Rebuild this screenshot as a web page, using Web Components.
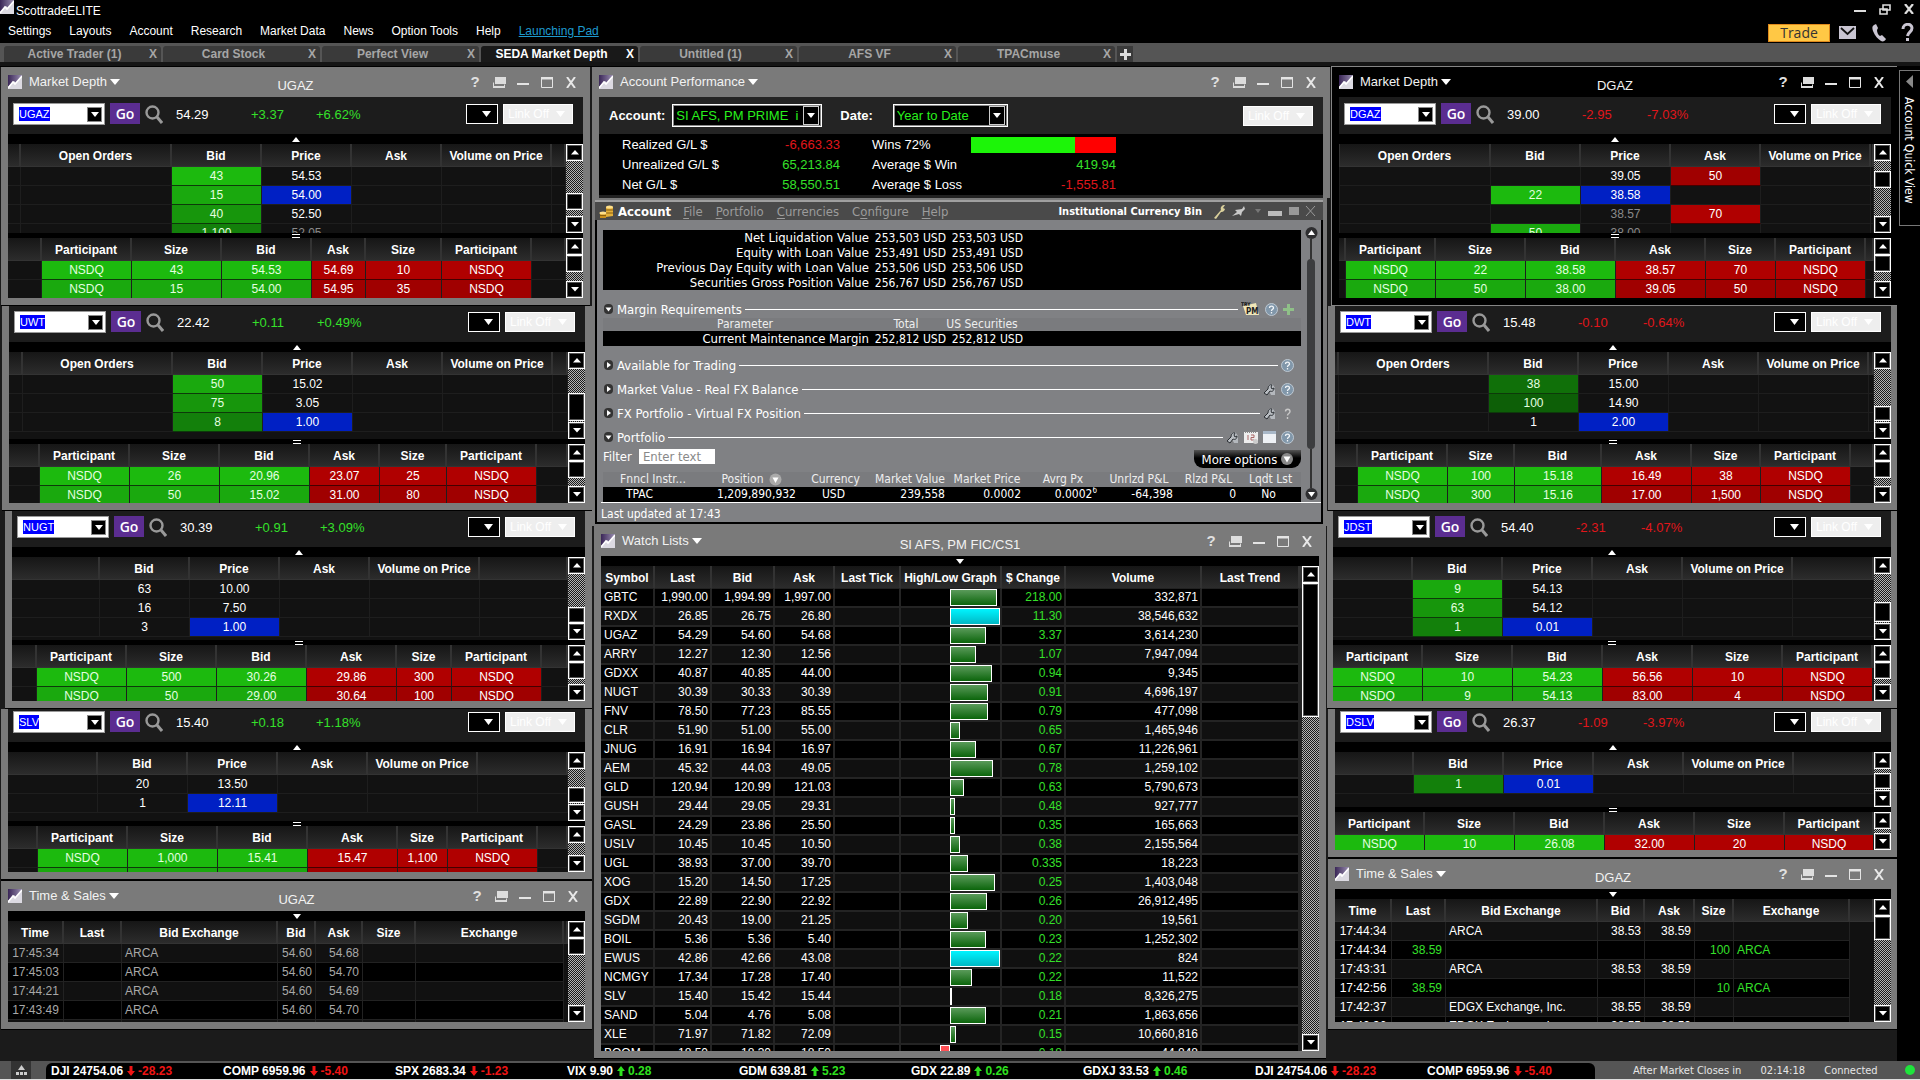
<!DOCTYPE html>
<html lang="en">
<head>
<meta charset="utf-8">
<title>ScottradeELITE</title>
<style>
  html, body { margin: 0; height: 100%; background: #000; }
  body { font: 12px/14px "Liberation Sans", Arial, sans-serif; color: #fff; overflow: hidden; }
</style>
</head>
<body>
<trading-app></trading-app>

<script>
/* ---------- helpers ---------- */
const BASE = `
  *, *::before, *::after { box-sizing: border-box; }
  button, select, input { font: inherit; color: inherit; margin: 0; padding: 0; border: 0; border-radius: 0; background: none; appearance: none; outline: none; }
  svg { display: block; }
  table { border-collapse: separate; border-spacing: 0; table-layout: fixed; width: 100%; }
  th, td { padding: 0; overflow: hidden; white-space: nowrap; }
`;
function define(name, css, render) {
  customElements.define(name, class extends HTMLElement {
    constructor() {
      super();
      this.attachShadow({ mode: 'open' });
    }
    connectedCallback() {
      this.shadowRoot.innerHTML = `<style>${BASE}${css}</style>${render(this)}`;
    }
  });
}
const cols = ws => `<colgroup>${ws.map(w => w ? `<col style="width:${w}px">` : '<col>').join('')}</colgroup>`;

/* ---------- data ---------- */
const DEPTH = {
  UGAZ: { last: '54.29', chg: '+3.37', pct: '+6.62%', bar: 37, pt: 6, pr: 10,
    top: { h: 89, cols: [13,151,90,90,90,110,0], orders: 1, before: 32, thumb: 17,
      rows: [['43','g1','54.53'],['15','g2','54.00','b'],['40','g3','52.50'],['1,100','g4','52.05','d']] },
    low: { h: 60, cols: [34,90,90,90,54,76,90,0], thumb: 17,
      rows: [['43','54.53','54.69','10'],['15','54.00','54.95','35']] } },
  UWT: { last: '22.42', chg: '+0.11', pct: '+0.49%', bar: 36, pt: 5, pr: 10,
    top: { h: 87, cols: [14,150,90,90,90,110,0], orders: 1, before: 24, thumb: 28,
      rows: [['50','g2','15.02'],['75','g3','3.05'],['8','g4','1.00','b']] },
    low: { h: 59, cols: [31,90,90,90,70,67,90,0], thumb: 17,
      rows: [['26','20.96','23.07','25'],['50','15.02','31.00','80']] } },
  NUGT: { last: '30.39', chg: '+0.91', pct: '+3.09%', bar: 36, pt: 5, pr: 10,
    top: { h: 83, cols: [88,90,90,90,110,0], before: 33, thumb: 16,
      rows: [['63','','10.00'],['16','','7.50'],['3','','1.00','b']] },
    low: { h: 56, cols: [25,90,90,90,90,55,90,0], thumb: 17,
      rows: [['500','30.26','29.86','300'],['50','29.00','30.64','100']] } },
  SLV: { last: '15.40', chg: '+0.18', pct: '+1.18%', bar: 33, pt: 2, pr: 10,
    top: { h: 69, cols: [90,90,90,90,110,0], before: 18, thumb: 16,
      rows: [['20','','13.50'],['1','','12.11','b']] },
    low: { h: 46, cols: [30,90,90,90,90,50,90,0],
      rows: [['1,000','15.41','15.47','1,100'],['','','','']] } },
  DGAZ: { last: '39.00', chg: '-2.95', pct: '-7.03%', bar: 37, pt: 6, pr: 10,
    top: { h: 89, cols: [1,151,90,90,90,110,0], orders: 1, before: 10, thumb: 17,
      rows: [['','','39.05','','50','r2'],['22','g1','38.58','b'],['','','38.57','d','70','r1'],['50','g2','38.00','d']] },
    low: { h: 60, cols: [7,90,90,90,90,70,90,0], thumb: 17,
      rows: [['22','38.58','38.57','70'],['50','38.00','39.05','50']] } },
  DWT: { last: '15.48', chg: '-0.10', pct: '-0.64%', bar: 36, pt: 5, pr: 10,
    top: { h: 87, cols: [4,150,90,90,90,110,0], orders: 1, before: 37, thumb: 15,
      rows: [['38','g5','15.00'],['100','g6','14.90'],['1','','2.00','b']] },
    low: { h: 59, cols: [23,90,67,87,90,69,90,0], thumb: 17,
      rows: [['100','15.18','16.49','38'],['300','15.16','17.00','1,500']] } },
  JDST: { last: '54.40', chg: '-2.31', pct: '-4.07%', bar: 36, pt: 5, pr: 10,
    top: { h: 83, cols: [80,90,90,90,110,0], before: 28, thumb: 20,
      rows: [['9','g2','54.13'],['63','g3','54.12'],['1','g4','0.01','b']] },
    low: { h: 56, cols: [90,90,90,90,90,90,0], tight: 1, thumb: 17,
      rows: [['10','54.23','56.56','10'],['9','54.13','83.00','4']] } },
  DSLV: { last: '26.37', chg: '-1.09', pct: '-3.97%', bar: 33, pt: 2, pr: 10,
    top: { h: 55, cols: [79,90,90,90,110,0], before: 4, thumb: 16,
      rows: [['1','g4','0.01','b']] },
    low: { h: 38, cols: [90,90,90,90,90,89,0], tight: 1,
      rows: [['10','26.08','32.00','20']] } },
};
const SALES = {
  UGAZ: { h: 101, cols: [56,58,156,38,47,53,148,0], before: 0, thumb: 17, tone: '#a8a8a8',
    rows: [['17:45:34','','ARCA','54.60','54.68','',''],['17:45:03','','ARCA','54.60','54.70','',''],
           ['17:44:21','','ARCA','54.60','54.69','',''],['17:43:49','','ARCA','54.60','54.70','',''],['','','','','','','']] },
  DGAZ: { h: 123, cols: [57,54,152,47,50,39,116,0], before: 0, thumb: 24, tone: '#fff',
    rows: [['17:44:34','','ARCA','38.53','38.59','',''],['17:44:34','38.59','','','','100','ARCA'],
           ['17:43:31','','ARCA','38.53','38.59','',''],['17:42:56','38.59','','','','10','ARCA'],
           ['17:42:37','','EDGX Exchange, Inc.','38.55','38.59','',''],['17:42:36','','EDGX Exchange, Inc.','38.55','38.59','','']] },
};
const WATCH = [
  ['GBTC','1,990.00','1,994.99','1,997.00',47,'218.00','332,871'],['RXDX','26.85','26.75','26.80',50,'11.30','38,546,632'],
  ['UGAZ','54.29','54.60','54.68',36,'3.37','3,614,230'],['ARRY','12.27','12.30','12.56',26,'1.07','7,947,094'],
  ['GDXX','40.87','40.85','44.00',42,'0.94','9,345'],['NUGT','30.39','30.33','30.39',38,'0.91','4,696,197'],
  ['FNV','78.50','77.23','85.55',38,'0.79','477,098'],['CLR','51.90','51.00','55.00',10,'0.65','1,465,946'],
  ['JNUG','16.91','16.94','16.97',26,'0.67','11,226,961'],['AEM','45.32','44.03','49.05',43,'0.78','1,259,102'],
  ['GLD','120.94','120.99','121.03',14,'0.63','5,790,673'],['GUSH','29.44','29.05','29.31',5,'0.48','927,777'],
  ['GASL','24.29','23.86','25.50',5,'0.35','165,663'],['USLV','10.45','10.45','10.50',10,'0.38','2,155,564'],
  ['UGL','38.93','37.00','39.70',18,'0.335','18,223'],['XOG','15.20','14.50','17.25',45,'0.25','1,403,048'],
  ['GDX','22.89','22.90','22.92',37,'0.26','26,912,495'],['SGDM','20.43','19.00','21.25',18,'0.20','19,561'],
  ['BOIL','5.36','5.36','5.40',36,'0.23','1,252,302'],['EWUS','42.86','42.66','43.08',50,'0.22','824'],
  ['NCMGY','17.34','17.28','17.40',22,'0.22','11,522'],['SLV','15.40','15.42','15.44',1,'0.18','8,326,275'],
  ['SAND','5.04','4.76','5.08',36,'0.21','1,863,656'],['XLE','71.97','71.82','72.09',6,'0.15','10,660,816'],
  ['BOOM','18.50','18.30','18.50',-10,'0.18','44,848'],
];
const TICKER = [['DJI','24754.06','-28.23'],['COMP','6959.96','-5.40'],['SPX','2683.34','-1.23'],['VIX','9.90','0.28'],['GDM','639.81','5.23'],
  ['GDX','22.89','0.26'],['GDXJ','33.53','0.46'],['DJI','24754.06','-28.23'],['COMP','6959.96','-5.40']];

const LOGO = size => `<svg width="${size}" height="${size}" viewBox="0 0 14 14"><defs><linearGradient id="lg" x1="0" y1="0" x2="1" y2="0"><stop offset="0" stop-color="#3a2657"/><stop offset="1" stop-color="#9a8fb0"/></linearGradient></defs><rect width="14" height="14" fill="#dcdae2"/><path d="M0 0H14V1L8 8 6 6 0 12Z" fill="url(#lg)"/><path d="M0 13 5 7l2 2 7-8" fill="none" stroke="#fff" stroke-width="1.6"/></svg>`;

/* ---------- small parts ---------- */
define('app-scrollbar', `
  :host { display: flex; flex-direction: column; flex: none; width: 17px; background: repeating-conic-gradient(#b4b4b4 0 25%, #1a1a1a 0 50%) 0 0/2px 2px; }
  button { flex: none; height: 17px; background: #000; border: 1px solid #fff; box-shadow: inset 0 0 0 1px #555; display: grid; place-items: center; }
  .thumb { flex: none; background: #000; border: 1px solid #fff; box-shadow: inset 0 0 0 1px #555; }
  .fill { flex: 1; }
`, el => `
  <button aria-label="Scroll up"><svg width="8" height="5"><path d="M4 0 8 4.500H0Z" fill="#fff"/></svg></button>
  <div style="height:${el.getAttribute('before') || 0}px"></div>
  <div class="thumb" style="height:${el.getAttribute('thumb') || 0}px;${el.getAttribute('thumb') ? '' : 'display:none'}"></div>
  <div class="fill"></div>
  <button aria-label="Scroll down"><svg width="8" height="5"><path d="M0 0H8L4 4.500Z" fill="#fff"/></svg></button>`);

define('link-select', `
  :host { display: block; font-size: 12px; }
  label { display: flex; align-items: center; width: 70px; height: 20px; background: #eee; border: 1px solid #fff; color: #fff; padding-right: 7px; }
  select { flex: 1; min-width: 0; height: 18px; padding-left: 4px; }
  option { color: #000; }
`, () => `<label><select aria-label="Link"><option>Link Off</option></select><svg width="9" height="6"><path d="M0 0H9L4.500 6Z" fill="#fff"/></svg></label>`);

define('strip-handle', `
  :host { display: grid; place-items: center; flex: none; height: 10px; background: #000; }
  :host([kind="grip"]) { height: 5px; }
`, el => ({
  up: '<svg width="8" height="5"><path d="M4 0 8 5H0Z" fill="#fff"/></svg>',
  down: '<svg width="8" height="5"><path d="M0 0H8L4 5Z" fill="#fff"/></svg>',
  grip: '<svg width="8" height="4"><path d="M0 .5H8M0 3.500H8" stroke="#fff"/></svg>',
})[el.getAttribute('kind')]);

/* ---------- window frame ---------- */
define('app-window', `
  :host { display: flex; flex-direction: column; background: #7a7a7a; border-bottom: 1px solid #000; padding: 0 7px 7px; }
  :host([active]) { background: #000; border: 1px solid #858585; border-right: 0; padding: 0 6px 7px 7px; }
  :host([last-depth]) { border-bottom-width: 2px; }
  header { display: grid; grid-template-columns: 1fr auto 1fr; align-items: center; height: 30px; flex: none; font-size: 13px; line-height: 16px; color: #f2f2f2; }
  .name { display: flex; align-items: center; gap: 7px; }
  .name button { display: flex; align-items: center; gap: 3px; }
  .cap { padding-top: 7px; }
  .ctl { justify-self: end; display: flex; align-items: center; gap: 12px; padding-right: 6px; font: bold 15px/16px "Liberation Sans", Arial, sans-serif; color: #e0e0e0; }
  .ctl button { display: grid; place-items: center; width: 12px; height: 16px; }
  ::slotted(*) { flex: 1 1 auto; }
`, el => (el.getAttribute('heading') ? `
  <header>
    <div class="name">${LOGO(14)}<button>${el.getAttribute('heading')}<svg width="10" height="6"><path d="M0 0H10L5 6Z" fill="#fff"/></svg></button></div>
    <div class="cap">${el.getAttribute('caption') || ''}</div>
    <div class="ctl">
      <button aria-label="Help">?</button>
      <button aria-label="Restore"><svg width="13" height="11"><path d="M2 0H13V7H2Z" fill="#ddd"/><path d="M.5 5.500V10H11.500V7.500" fill="none" stroke="#ddd"/><path d="M0 9H12V11H0Z" fill="#ddd"/></svg></button>
      <button aria-label="Minimize"><svg width="12" height="10"><path d="M0 6H12V8H0Z" fill="#e4e4e4"/></svg></button>
      <button aria-label="Maximize"><svg width="12" height="11"><path d="M.5 .5H11.500V10.500H.5Z" fill="none" stroke="#e4e4e4"/><path d="M0 0H12V2.500H0Z" fill="#e4e4e4"/></svg></button>
      <button aria-label="Close"><svg width="10" height="11"><path d="M1 0 9 11M9 0 1 11" stroke="#e8e8e8" stroke-width="2"/></svg></button>
    </div>
  </header>` : '') + '<slot></slot>');

/* ---------- market depth ---------- */
define('market-depth', `
  :host { display: flex; flex-direction: column; }
  .bar { display: flex; align-items: flex-start; background: #1c1c1c; font-size: 13px; flex: none; }
  .combo { display: flex; justify-content: space-between; width: 92px; height: 22px; margin-left: 5px; background: #fff; border: 1px solid #999; padding: 3px 2px 2px 5px; }
  .combo input { field-sizing: content; max-width: 60px; height: 14px; background: #00f; color: #fff; font-size: 11px; line-height: 14px; }
  .combo button { width: 15px; height: 15px; background: #000; border: 1px solid #888; display: grid; place-items: center; }
  .go { width: 30px; height: 21px; margin: 0 5px; background: #5b2d91; font: 600 14px/20px "Open Sans", "Noto Sans", sans-serif; }
  .find { width: 18px; height: 22px; display: grid; place-items: center; }
  .quote { display: flex; flex: 1; padding-left: 13px; line-height: 23px; }
  .last { width: 75px; } .chg { width: 65px; }
  .quote.up .mv { color: #35e02a; } .quote.down .mv { color: #e0161b; }
  .style { display: flex; justify-content: flex-end; align-items: center; width: 32px; height: 20px; margin: 1px 5px 0 0; border: 1px solid #fff; background: #000; padding-right: 6px; }
  link-select { margin-top: 1px; }
  .pane { display: flex; flex: none; background: #121212; overflow: hidden; }
  .view { flex: 1; min-width: 0; overflow: hidden; }
  th { height: 23px; padding-top: 2px; background: linear-gradient(#161616, #2c2c2c); border-right: 2px solid #333; border-bottom: 1px solid #333; font-weight: bold; text-align: center; }
  td { height: 19px; border-right: 1px solid #1e1e1e; border-bottom: 1px solid #1e1e1e; text-align: center; line-height: 16px; }
  td.f { color: #e4ffe0; border-bottom-color: #0d3a0a; }
  .g1 { background: #1cba0e; } .g2 { background: #1aa90e; } .g3 { background: #17960c; } .g4 { background: #13800b; } .g5 { background: #107009; } .g6 { background: #0d5f07; }
  .r1 { background: #b00000; } .r2 { background: #a00000; }
  td.r { color: #fff; border-bottom-color: #400; }
  .b { background: #0020c4; } .d { color: #8a8a8a; }
`, el => {
  const s = el.getAttribute('symbol'), d = DEPTH[s], t = d.top, l = d.low;
  const heads = (t.orders ? ['', 'Open Orders'] : ['']).concat('Bid', 'Price', 'Ask', 'Volume on Price', '');
  const rows = t.rows.map(([bid, bc, price, pc, ask, ac]) => `<tr>${(t.orders ? '<td></td><td></td>' : '<td></td>')}
    <td class="${bc ? bc + ' f' : ''}">${bid}</td><td class="${pc || ''}">${price}</td><td class="${ac ? ac + ' r' : ''}">${ask || ''}</td><td></td><td></td></tr>`).join('');
  const lead = l.tight ? '' : '<td></td>';
  const lheads = (l.tight ? [] : ['']).concat('Participant', 'Size', 'Bid', 'Ask', 'Size', 'Participant', '');
  const lrows = l.rows.map(([bs, bp, ap, as], i) => {
    const g = `class="g${i + 1} f"`, r = `class="r${i + 1} r"`, p = bs ? 'NSDQ' : '';
    return `<tr>${lead}<td ${g}>${p}</td><td ${g}>${bs}</td><td ${g}>${bp}</td><td ${r}>${ap}</td><td ${r}>${as}</td><td ${r}>${p}</td><td></td></tr>`;
  }).join('');
  const th = a => `<thead><tr>${a.map(h => h ? `<th>${h}</th>` : '<th aria-hidden="true"></th>').join('')}</tr></thead>`;
  return `
  <div class="bar" style="height:${d.bar}px;padding:${d.pt}px ${d.pr}px 0 0">
    <div class="combo"><input aria-label="Symbol" value="${s}"><button aria-label="Symbol list"><svg width="8" height="5"><path d="M0 0H8L4 5Z" fill="#fff"/></svg></button></div>
    <button class="go">Go</button>
    <button class="find" aria-label="Find symbol"><svg width="18" height="19"><circle cx="7.500" cy="7.500" r="6" fill="none" stroke="#999" stroke-width="2.400"/><path d="M12 12 17 18" stroke="#999" stroke-width="3"/></svg></button>
    <div class="quote ${d.chg[0] === '+' ? 'up' : 'down'}"><span class="last">${d.last}</span><span class="chg mv">${d.chg}</span><span class="mv">${d.pct}</span></div>
    <button class="style" aria-label="Link colour"><svg width="9" height="6"><path d="M0 0H9L4.500 6Z" fill="#fff"/></svg></button>
    <link-select></link-select>
  </div>
  <strip-handle kind="up"></strip-handle>
  <div class="pane" style="height:${t.h}px"><div class="view"><table>${cols(t.cols)}${th(heads)}<tbody>${rows}</tbody></table></div><app-scrollbar before="${t.before}" thumb="${t.thumb}"></app-scrollbar></div>
  <strip-handle kind="grip"></strip-handle>
  <div class="pane" style="height:${l.h}px"><div class="view"><table>${cols(l.cols)}${th(lheads)}<tbody>${lrows}</tbody></table></div><app-scrollbar ${l.thumb ? `thumb="${l.thumb}"` : ''}></app-scrollbar></div>`;
});

/* ---------- time & sales ---------- */
define('time-sales', `
  :host { display: flex; flex-direction: column; }
  .pane { display: flex; background: #151515; overflow: hidden; }
  .view { flex: 1; min-width: 0; overflow: hidden; }
  th { height: 23px; padding-top: 2px; background: linear-gradient(#161616, #2c2c2c); border-right: 2px solid #333; border-bottom: 1px solid #333; text-align: center; }
  td { height: 19px; border-right: 1px solid #222; border-bottom: 1px solid #222; line-height: 16px; padding: 0 3px; text-align: right; background: #111; }
  tr:nth-child(even) td { background: #000; }
  td:nth-child(1) { text-align: center; padding: 0; }
  td:nth-child(3), td:nth-child(7) { text-align: left; }
  tr td:last-child { background: #111; border-color: #111; }
  .trade td:not(:first-child) { color: #35e02a; }
`, el => {
  const d = SALES[el.getAttribute('symbol')];
  return `<strip-handle kind="down"></strip-handle>
  <div class="pane" style="height:${d.h}px"><div class="view"><table style="color:${d.tone}">${cols(d.cols)}
    <thead style="color:#fff"><tr>${['Time','Last','Bid Exchange','Bid','Ask','Size','Exchange',''].map(h => `<th>${h}</th>`).join('')}</tr></thead>
    <tbody>${d.rows.map(r => `<tr class="${r[1] ? 'trade' : ''}">${r.map(c => `<td>${c}</td>`).join('')}<td></td></tr>`).join('')}</tbody></table></div>
    <app-scrollbar before="${d.before}" thumb="${d.thumb}"></app-scrollbar></div>`;
});

/* ---------- watch list ---------- */
define('watch-list', `
  :host { display: flex; flex-direction: column; min-height: 0; }
  .pane { display: flex; height: 485px; background: #151515; overflow: hidden; }
  .view { flex: 1; min-width: 0; overflow: hidden; }
  th { height: 23px; padding-top: 2px; background: linear-gradient(#161616, #2c2c2c); border-right: 2px solid #333; border-bottom: 1px solid #222; text-align: center; }
  td { height: 19px; border-right: 2px solid #242424; border-bottom: 2px solid #242424; background: #000; text-align: right; padding: 0 2px; line-height: 17px; }
  tr:nth-child(even) td { background: #101010; }
  td:first-child { text-align: left; padding-left: 3px; }
  td.chg { color: #35e02a; }
  td.graph { padding: 0 0 0 49px; }
  td.graph.neg { padding-left: 39px; }
  .hl { display: block; height: 17px; border: 1px solid #fff; background: linear-gradient(#5a9a5a, #0b650b); }
  .hl.full { background: linear-gradient(#00f4ff, #00b8c4); }
  .hl.neg { background: #ff5055; }
`, () => `<strip-handle kind="down"></strip-handle>
  <div class="pane"><div class="view"><table>${cols([54,57,63,60,66,101,64,136,98,0])}
    <thead><tr>${['Symbol','Last','Bid','Ask','Last Tick','High/Low Graph','$ Change','Volume','Last Trend',''].map(h => `<th>${h}</th>`).join('')}</tr></thead>
    <tbody>${WATCH.map(([s,l,b,a,g,c,v]) => `<tr><td>${s}</td><td>${l}</td><td>${b}</td><td>${a}</td><td></td>
      <td class="graph ${g < 0 ? 'neg' : ''}"><span class="hl ${g === 50 ? 'full' : g < 0 ? 'neg' : ''}" style="width:${Math.abs(g)}px"></span></td>
      <td class="chg">${c}</td><td>${v}</td><td></td><td></td></tr>`).join('')}</tbody></table></div>
    <app-scrollbar before="0" thumb="134"></app-scrollbar></div>`);

/* ---------- account performance ---------- */
define('account-performance', `
  :host { display: block; background: #000; font-size: 13px; }
  .bar { display: flex; align-items: center; height: 37px; padding: 0 10px; background: #242424; }
  b { font-weight: bold; }
  .box { display: flex; align-items: center; height: 23px; background: #000; border: 1px solid #fff; box-shadow: inset 0 0 0 1px #888; color: #28f01c; padding: 2px 2px 2px 3px; }
  .box select { flex: 1; min-width: 0; height: 18px; }
  .box option { color: #000; }
  .box span { width: 16px; height: 19px; border: 1px solid #ccc; display: grid; place-items: center; }
  .acct { width: 150px; margin: 0 18px 0 7px; } .date { width: 115px; margin-left: 20px; }
  link-select { margin-left: auto; }
  .stats { display: grid; grid-template-columns: 120px 98px 32px 99px 145px; grid-auto-rows: 20px; align-items: center; height: 64px; padding: 1px 0 0 23px; border-bottom: 3px solid #222; }
  .stats > :nth-child(4n+3) { grid-column: 4; }
  .n { text-align: right; } .up { color: #35e02a; } .down { color: #e0161b; }
  .wins { display: flex; height: 16px; } .wins i:first-child { flex: 72; background: #1cf508; } .wins i:last-child { flex: 28; background: #f00; }
`, () => {
  const arrow = '<span><svg width="8" height="5"><path d="M0 0H8L4 5Z" fill="#fff"/></svg></span>';
  return `<div class="bar">
    <b>Account:</b><label class="box acct"><select aria-label="Account"><option>SI AFS, PM PRIME&nbsp; i</option></select>${arrow}</label>
    <b>Date:</b><label class="box date"><select aria-label="Date"><option>Year to Date</option></select>${arrow}</label>
    <link-select></link-select></div>
  <div class="stats">
    <span>Realized G/L $</span><span class="n down">-6,663.33</span><span>Wins 72%</span><span class="wins"><i></i><i></i></span>
    <span>Unrealized G/L $</span><span class="n up">65,213.84</span><span>Average $ Win</span><span class="n up">419.94</span>
    <span>Net G/L $</span><span class="n up">58,550.51</span><span>Average $ Loss</span><span class="n down">-1,555.81</span>
  </div>`;
});

/* ---------- broker account window ---------- */
const WRENCH = '<svg width="13" height="13" viewBox="0 0 13 13"><path d="M5 6C4 2 8 0 10 2l2 3v7H8Z" fill="#b4b8bd"/><path d="M1 10l4-4C5 3 7 1 9 2L8 4l1 2 2-1c0 3-2 4-4 3l-3 4Z" fill="#b9bdc2" stroke="#2b2f33"/></svg>';
const HELP = '<svg width="13" height="13" viewBox="0 0 13 13"><circle cx="6.500" cy="6.500" r="6" fill="#8197aa" stroke="#bcc8d2"/><path d="M4.500 5c0-2.500 4-2.500 4 0 0 1.300-2 1.300-2 3M6.500 9v1.500" fill="none" stroke="#f2f5f8" stroke-width="1.300"/></svg>';
const HELP_PLAIN = '<svg width="13" height="13" viewBox="0 0 13 13"><path d="M4.500 4.500c0-3 4.500-3 4.500 0 0 2-2.500 2-2.500 4M6.500 10v2" fill="none" stroke="#c8c8c8" stroke-width="1.400"/></svg>';

define('section-line', `
  :host { display: flex; align-items: center; height: 24px; padding: 0 7px 0 1px; }
  button { display: flex; align-items: center; gap: 4px; text-align: left; white-space: nowrap; font-size: 13px; }
  .rule { flex: 1; height: 1px; margin: 0 3px 0 3px; background: #fff; }
  ::slotted(span) { display: flex; gap: 5px; align-items: center; }
`, el => `<button><svg width="9" height="10"><rect width="9" height="10" rx="4" fill="#333"/>${el.hasAttribute('open')
  ? '<path d="M1.500 3.500H7.500L4.500 7.500Z" fill="#fff"/>' : '<path d="M3 2V8L7 5Z" fill="#fff"/>'}</svg>${el.getAttribute('label')}</button><div class="rule"></div><slot></slot>`);

define('broker-account', `
  :host { display: block; height: 328px; background: #7a7a7a; padding: 2px 4px 2px 3px; font: 12px/15px "DejaVu Sans Condensed", "Noto Sans", sans-serif; }
  .frame { height: 324px; border-top: 2px solid #a0a0a0; display: flex; flex-direction: column; }
  header { display: flex; align-items: center; height: 18px; flex: none; background: #4a4a4a; color: #9c9c9c; font-size: 13px; padding: 0 7px 0 4px; }
  header b { color: #fff; margin: 0 12px 0 4px; }
  header button + button { margin-left: 13px; }
  header u { text-underline-offset: 2px; }
  .right { margin-left: auto; display: flex; align-items: center; gap: 6px; }
  .right strong { color: #fff; font-size: 11px; margin-right: 5px; }
  .body { flex: 1; display: flex; flex-direction: column; background: #808184; border: 2px solid #000; border-top: 0; min-height: 0; }
  .scroll { flex: 1; display: flex; min-height: 0; }
  .list { flex: 1; min-width: 0; padding: 10px 0 0 6px; }
  .rail { width: 20px; display: flex; flex-direction: column; align-items: center; padding: 7px 0 2px; }
  .rail .line { width: 2px; background: #333; height: 20px; }
  .rail .thumb { width: 8px; flex: 1; border-radius: 4px; background: #3c3d3f; }
  td, th { height: 15px; line-height: 15px; text-align: right; font-weight: normal; }
  .stat { background: #000; }
  .stat td { padding-top: 1px; line-height: 14px; }
  .stat td:first-child { font-size: 13px; }
  .stat table, .head table { width: 420px; }
  .head { background: #7a7b7e; height: 13px; overflow: hidden; color: #eee; }
  .head th { height: 13px; line-height: 13px; text-align: center; }
  .head th:first-child { padding-left: 16px; }
  .gap { height: 10px; } .gap7 { height: 7px; }
  .first { height: 18px; }
  .filter { display: flex; align-items: flex-start; justify-content: space-between; height: 23px; }
  label { display: flex; align-items: center; gap: 7px; font-size: 13px; }
  input { width: 76px; height: 15px; background: #fff; color: #333; padding: 0 4px; }
  input::placeholder { color: #888; opacity: 1; }
  .more { display: flex; align-items: center; justify-content: center; gap: 4px; width: 107px; height: 18px; margin-top: 1px; background: linear-gradient(#555, #000 45%); border-radius: 0 0 9px 9px; color: #fff; font-size: 13px; }
  .pf th { text-align: center; color: #eee; background: #7a7b7e; }
  .pf th svg { display: inline-block; vertical-align: top; margin: 1px 0 0 5px; }
  .pf td { background: #000; padding-right: 4px; }
  sup { font-size: 8px; line-height: 0; }
  .foot { flex: none; height: 20px; margin: 0 0 0 4px; border-top: 1px solid #fff; line-height: 22px; overflow: hidden; }
`, () => {
  const three = rows => `<table>${cols([266,77,77])}<tbody>${rows.map(r => `<tr>${r.map(c => `<td>${c}</td>`).join('')}</tr>`).join('')}</tbody></table>`;
  const knob = d => `<svg width="13" height="12" viewBox="0 0 13 12"><circle cx="6.500" cy="6" r="6" fill="#2e2e30"/><path d="${d}" fill="#fff"/></svg>`;
  return `<div class="frame">
  <header>
    <svg width="15" height="15" viewBox="0 0 15 15"><path d="M1 9h6v5H1Z" fill="#c98f1c"/><path d="M7 3h7v9l-7 1Z" fill="#e3b03a"/><ellipse cx="4" cy="9" rx="3.500" ry="1.500" fill="#ffe08a"/><ellipse cx="10.500" cy="3" rx="3.500" ry="1.600" fill="#ffe08a"/><path d="M1 11.500h6M7 6h7M7 9h7" stroke="#8c5f0c"/></svg>
    <b>Account</b><button><u>F</u>ile</button><button><u>P</u>ortfolio</button><button><u>C</u>urrencies</button><button>C<u>o</u>nfigure</button><button><u>H</u>elp</button>
    <div class="right"><strong>Institutional Currency Bin</strong>
      <svg width="13" height="15"><path d="M1 14 8 6C7 3 9 1 12 1L10 4l2 1c-1 3-3 3-4 3L3 15Z" fill="#d9cf9b"/></svg>
      <svg width="14" height="12"><path d="M0 11 5 7 3 5 10 4 12 1l1 3-3 3-1 4-2-2Z" fill="#c9c9c9"/></svg>
      <svg width="10" height="10"><path d="M3 3H9L6 7Z" fill="#777"/></svg>
      <svg width="14" height="10"><rect y="5" width="14" height="5" fill="#bbb"/></svg>
      <svg width="11" height="10"><rect x="1" y="1" width="10" height="8" fill="#999"/></svg>
      <svg width="11" height="12"><path d="M1 1 10 11M10 1 1 11" stroke="#999"/></svg>
    </div>
  </header>
  <div class="body">
    <div class="scroll"><div class="list">
      <div class="stat">${three([['Net Liquidation Value','253,503 USD','253,503 USD'],['Equity with Loan Value','253,491 USD','253,491 USD'],['Previous Day Equity with Loan Value','253,506 USD','253,506 USD'],['Securities Gross Position Value','256,767 USD','256,767 USD']])}</div>
      <div class="gap"></div>
      <section-line class="first" open label="Margin Requirements"><span>
        <svg width="19" height="16" viewBox="0 0 19 16"><path d="M2 5 15 2l3 12H5Z" fill="#efe6b8"/><text x="5" y="13" font-family="DejaVu Sans Condensed, sans-serif" font-weight="bold" font-size="8" fill="#222">PM</text><text x="0" y="5" font-family="DejaVu Sans Condensed, sans-serif" font-weight="bold" font-size="5" fill="#111">TRY</text></svg>
        ${HELP}<svg width="11" height="13"><path d="M4 1H7V5H11V8H7V12H4V8H0V5H4Z" fill="#8fc088"/></svg></span></section-line>
      <div class="head"><table>${cols([268,70,82])}<thead><tr><th>Parameter</th><th>Total</th><th>US Securities</th></tr></thead></table></div>
      <div class="stat">${three([['Current Maintenance Margin','252,812 USD','252,812 USD']])}</div>
      <div class="gap7"></div>
      <section-line label="Available for Trading"><span>${HELP}</span></section-line>
      <section-line label="Market Value - Real FX Balance"><span>${WRENCH}${HELP}</span></section-line>
      <section-line label="FX Portfolio - Virtual FX Position"><span>${WRENCH}${HELP_PLAIN}</span></section-line>
      <section-line open label="Portfolio"><span>${WRENCH}
        <svg width="14" height="14"><rect y="2" width="14" height="11" fill="#eee"/><path d="M1 2h12" stroke="#888" stroke-width="2" stroke-dasharray="1 1"/><path d="M4 5v5M7 5h3v2.500H7V10h3" fill="none" stroke="#a66"/><circle cx="11.500" cy="11.500" r="2.500" fill="#ccc"/></svg>
        <svg width="13" height="12"><rect width="13" height="12" fill="#eef1f5"/><rect width="13" height="3" fill="#a9b8c8"/></svg>${HELP}</span></section-line>
      <div class="filter"><label>Filter <input placeholder="Enter text"></label>
        <button class="more">More options <svg width="12" height="12"><circle cx="6" cy="6" r="6" fill="#888"/><path d="M2.500 3.500H9.500L6 9.500Z" fill="#fff"/></svg></button></div>
      <table class="pf">${cols([100,97,71,78,76,76,76,63,0])}
        <thead><tr><th>Fnncl Instr...</th><th>Position<svg width="13" height="13"><circle cx="6.500" cy="6.500" r="6" fill="#aaa"/><path d="M3.500 4.500H9.500L6.500 10Z" fill="#fff"/></svg></th><th>Currency</th><th>Market Value</th><th>Market Price</th><th>Avrg Px</th><th>Unrlzd P&amp;L</th><th>Rlzd P&amp;L</th><th>Lqdt Lst</th></tr></thead>
        <tbody><tr><td style="text-align:left;padding-left:23px">TPAC</td><td>1,209,890,932</td><td style="text-align:center">USD</td><td>239,558</td><td>0.0002</td><td>0.0002<sup>6</sup></td><td>-64,398</td><td>0</td><td style="text-align:center">No</td></tr></tbody></table>
    </div>
    <div class="rail">${knob('M6.500 3 10 8H3Z')}<div class="line"></div><div class="thumb"></div><div class="line" style="height:39px"></div>${knob('M3 4H10L6.500 9Z')}</div></div>
    <div class="foot">Last updated at 17:43</div>
  </div></div>`;
});

/* ---------- top bar and tabs ---------- */
define('app-header', `
  :host { display: grid; grid-template-columns: 1fr auto; height: 43px; background: #000; }
  .title { display: flex; align-items: flex-start; gap: 2px; height: 22px; }
  .title span { padding-top: 4px; }
  nav { display: flex; gap: 18px; padding-left: 8px; line-height: 18px; }
  nav a { color: #1e9bd0; }
  .win, .tools { display: flex; align-items: center; justify-content: flex-end; }
  .win { height: 18px; gap: 13px; padding-right: 6px; }
  .tools { gap: 15px; height: 29px; padding: 0 6px 0 0; }
  .left, .rt { display: flex; flex-direction: column; }
  .trade { width: 62px; height: 18px; margin-right: -6px; background: #ffc845; border: 1px solid #e08a1c; color: #333; font-size: 14px; line-height: 16px; font-family: "Open Sans", sans-serif; }
`, () => `<div class="left"><div class="title">${LOGO(14)}<span>ScottradeELITE</span></div>
  <nav>${['Settings','Layouts','Account','Research','Market Data','News','Option Tools','Help'].map(t => `<button>${t}</button>`).join('')}<a href="#pad">Launching Pad</a></nav></div>
  <div class="rt"><div class="win">
    <button aria-label="Minimize"><svg width="12" height="10"><path d="M0 6H12V8H0Z" fill="#ddd"/></svg></button>
    <button aria-label="Restore"><svg width="12" height="11"><path d="M4 1H11V6H4ZM1 5H8V10H1Z" fill="none" stroke="#ddd" stroke-width="1.600"/></svg></button>
    <button aria-label="Close"><svg width="10" height="10"><path d="M1 0 9 10M9 0 1 10" stroke="#ddd" stroke-width="2.200"/></svg></button></div>
  <div class="tools"><button class="trade">Trade</button>
    <button aria-label="Mail"><svg width="17" height="13"><rect width="17" height="13" fill="#c9c5d2"/><path d="M2 2 8.500 8 15 2" fill="none" stroke="#111" stroke-width="1.800"/></svg></button>
    <button aria-label="Phone"><svg width="15" height="18"><path d="M3 1C1 2 1 4 2 7c2 5 5 8 8 10 2 1 4 0 5-2l-4-4-2 1C7 11 6 8 6 6l1-2L5 0Z" fill="#c9c5d2"/></svg></button>
    <button aria-label="Help"><svg width="13" height="19"><path d="M2 6c0-6 9-6 9-1 0 4-4 4-4.500 8" fill="none" stroke="#c9c5d2" stroke-width="3"/><rect x="5" y="15" width="3" height="3" fill="#c9c5d2"/></svg></button></div></div>`);

define('app-tabs', `
  :host { display: flex; height: 23px; background: #555; border-bottom: 4px solid #151515; padding-left: 4px; align-items: flex-end; }
  .tab { display: flex; align-items: center; width: 157px; margin-right: 2px; height: 16px; background: #3a3a3a; border-radius: 3px 3px 0 0; color: #a6a6a6; font-weight: bold; }
  .tab button { height: 16px; line-height: 14px; }
  .tab button:first-child { flex: 1; }
  .tab button:last-child { width: 16px; }
  .tab.on { background: #191919; color: #fff; }
  .add { width: 16px; height: 16px; background: #3a3a3a; display: grid; place-items: center; }
`, () => ['Active Trader (1)','Card Stock','Perfect View','SEDA Market Depth','Untitled (1)','AFS VF','TPACmuse'].map((t, i) =>
  `<div class="tab ${i === 3 ? 'on' : ''}"><button>${t}</button><button aria-label="Close tab">X</button></div>`).join('') +
  '<button class="add" aria-label="Add tab"><svg width="11" height="11"><path d="M5.500 0V11M0 5.500H11" stroke="#ddd" stroke-width="3"/></svg></button>');

/* ---------- side panel and status ---------- */
define('quick-view', `
  :host { display: block; background: #000; padding: 4px 0 0 2px; }
  button { display: flex; flex-direction: column; align-items: center; gap: 9px; width: 100%; height: 156px; border: 1px solid #777; border-right: 0; padding: 4px 2px 0 0; }
  span { writing-mode: vertical-rl; font: 12px/14px "DejaVu Sans Condensed", "Noto Sans", sans-serif; }
`, () => `<button><svg width="7" height="13"><path d="M7 0V13L0 6.500Z" fill="#888"/></svg><span>Account Quick View</span></button>`);

define('status-bar', `
  :host { display: flex; height: 19px; background: #555; border-bottom: 1px solid #ddd; }
  .menu { width: 20px; margin: 0 15px 0 11px; background: #333; display: grid; place-items: center; }
  .ticker { display: flex; flex: 1; min-width: 0; background: #000; border-radius: 6px 6px 0 0; margin-top: 2px; padding-left: 5px; font-weight: bold; overflow: hidden; line-height: 17px; }
  .ticker div { flex: 1 0 172px; display: flex; align-items: center; }
  svg { margin: 0 3px 0 4px; }
  .up { color: #2fe01f; } .down { color: #f01414; }
  .state { display: flex; align-items: center; width: 325px; padding: 0 5px 0 38px; font: 11px/17px "DejaVu Sans Condensed", "Noto Sans", sans-serif; color: #e6e6e6; white-space: nowrap; }
  .state span { flex: 1 0 auto; }
  .dot { width: 10px; height: 10px; margin-left: 8px; border-radius: 5px; background: #1fe43c; }
`, () => `<button class="menu" aria-label="Ticker menu"><svg style="margin:0" width="13" height="11"><path d="M6.500 0 10 5H3Z" fill="#ccc"/><path d="M1 7h3v3H1ZM5 7h3v3H5ZM9 7h3v3H9Z" fill="#ccc"/></svg></button>
  <div class="ticker">${TICKER.map(([s,v,c]) => { const up = c[0] !== '-'; return `<div>${s} ${v}<svg width="8" height="10"><path d="${up ? 'M4 0 8 5H5.500V10H2.500V5H0Z' : 'M4 10 8 5H5.500V0H2.500V5H0Z'}" fill="${up ? '#2fe01f' : '#f01414'}"/></svg><span class="${up ? 'up' : 'down'}">${c}</span></div>`; }).join('')}</div>
  <div class="state"><span>After Market Closes in</span><span>02:14:18</span><span>Connected</span><i class="dot"></i></div>`);

/* ---------- page ---------- */
define('trading-app', `
  :host { display: flex; flex-direction: column; min-height: 100vh; background: #1b1b1b; }
  main { flex: 1; display: grid; grid-template-columns: minmax(0,592fr) minmax(0,735fr) minmax(0,570fr) 23px; min-height: 995px; }
  .col { display: flex; flex-direction: column; border-top: 1px solid #000; }
  .col > * { flex: none; }
  status-bar { flex: none; }
`, () => `<app-header></app-header><app-tabs></app-tabs>
  <main>
    <div class="col">
      <app-window heading="Market Depth" caption="UGAZ" style="margin:0 2px 0 1px"><market-depth symbol="UGAZ"></market-depth></app-window>
      <app-window style="margin-left:2px"><market-depth symbol="UWT"></market-depth></app-window>
      <app-window style="margin-left:5px"><market-depth symbol="NUGT"></market-depth></app-window>
      <app-window last-depth style="margin-left:1px"><market-depth symbol="SLV"></market-depth></app-window>
      <app-window style="margin-left:1px" heading="Time &amp; Sales" caption="UGAZ"><time-sales symbol="UGAZ"></time-sales></app-window>
    </div>
    <div class="col">
      <app-window heading="Account Performance" style="margin-right:-3px;padding-bottom:0;border-bottom:0"><account-performance></account-performance></app-window>
      <broker-account></broker-account>
      <app-window heading="Watch Lists" caption="SI AFS, PM FIC/CS1" style="margin:0 1px 0 2px"><watch-list></watch-list></app-window>
    </div>
    <div class="col">
      <app-window active heading="Market Depth" caption="DGAZ" style="margin:-1px 0 0 4px"><market-depth symbol="DGAZ"></market-depth></app-window>
      <app-window style="margin-left:1px;padding-right:6px"><market-depth symbol="DWT"></market-depth></app-window>
      <app-window style="padding-left:6px;padding-right:6px"><market-depth symbol="JDST"></market-depth></app-window>
      <app-window last-depth style="margin-left:1px;padding-right:6px"><market-depth symbol="DSLV"></market-depth></app-window>
      <app-window style="margin-left:1px;padding-right:6px" heading="Time &amp; Sales" caption="DGAZ"><time-sales symbol="DGAZ"></time-sales></app-window>
    </div>
    <quick-view></quick-view>
  </main>
  <status-bar></status-bar>`);
</script>
</body>
</html>
